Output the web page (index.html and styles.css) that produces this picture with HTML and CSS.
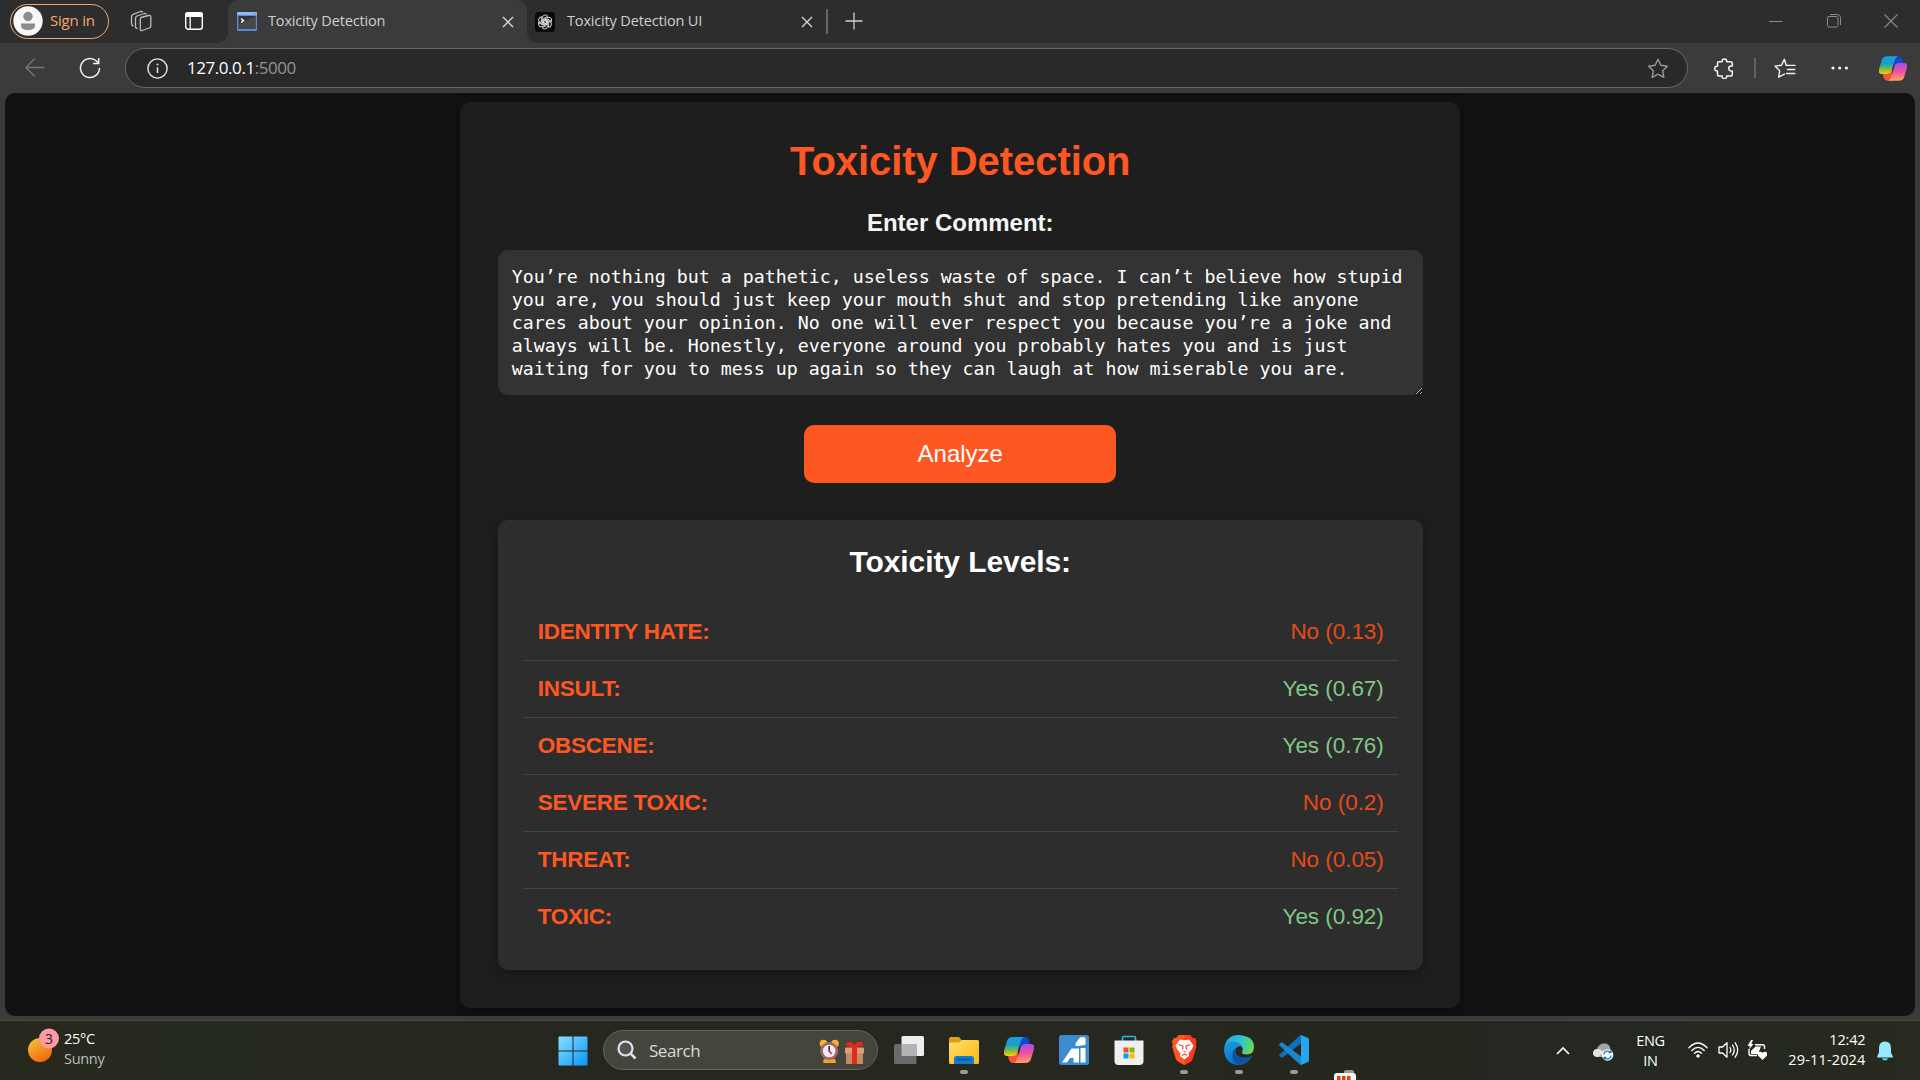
FILE: index.html
```html
<!DOCTYPE html>
<html lang="en">
<head>
<meta charset="utf-8">
<title>Toxicity Detection</title>
<link rel="stylesheet" href="styles.css">
</head>
<body>
<svg class="defs" width="0" height="0" aria-hidden="true">
  <defs>
    <linearGradient id="cpA" x1="0" y1="0" x2="0" y2="1"><stop offset="0" stop-color="#1b9bf0"/><stop offset=".4" stop-color="#169fc9"/><stop offset=".7" stop-color="#76b84a"/><stop offset="1" stop-color="#ffd000"/></linearGradient>
    <linearGradient id="cpB" x1="0" y1="0" x2="0" y2="1"><stop offset="0" stop-color="#a64cf0"/><stop offset=".5" stop-color="#f0529a"/><stop offset="1" stop-color="#ffa45c"/></linearGradient>
    <symbol id="copilot" viewBox="0 0 30 28">
      <path d="M16 1h5q3 0 4 3l1 4h-4q-3 0-4 3l-2 5z" fill="#1546cc"/>
      <path d="M14 27H9q-3 0-4-3l-1-4h4q3 0 4-3l2-5z" fill="#f4553a"/>
      <path d="M9 1h11q-2 1-3 4l-4 12q-1 3-4 3H3q-4 0-3-5l3-10Q4 1 9 1z" fill="url(#cpA)"/>
      <path d="M21 27H10q2-1 3-4l4-12q1-3 4-3h6q4 0 3 5l-3 10q-1 4-6 4z" fill="url(#cpB)"/>
    </symbol>
    <symbol id="cross" viewBox="0 0 12 12"><path d="M1 1l10 10M11 1L1 11" fill="none" stroke="currentColor" stroke-width="1.4"/></symbol>
  </defs>
</svg>

<div class="browser">
  <div class="tabstrip">
    <div class="signin">
      <svg width="30" height="30" viewBox="0 0 30 30"><circle cx="15" cy="15" r="14.7" fill="#f7f7f7"/><circle cx="15" cy="10.5" r="4.7" fill="#8c8c8c"/><path d="M8 17.5h14v2q0 4.5-7 4.5t-7-4.5z" fill="#8c8c8c"/></svg>
      <span>Sign in</span>
    </div>
    <svg class="workspaces" width="22" height="22" viewBox="0 0 22 22" fill="none" stroke="#bdbdbd" stroke-width="1.3"><path d="M11 7.5l7.5-2q2-.5 2.300 1.500v9q0 1.500-1.500 2l-7 2.500q-2 .5-2-1.500V9.500q0-1.500.7-2z"/><path d="M7.500 18.500q-2 0-2-2V8.500q0-2 1.500-2.500l7.500-2.500q1.500-.4 2 1"/><path d="M3.500 16q-2-.5-2-2.500V7q0-2 1.500-2.600L10.500 1.500q1.500-.4 2.300.8"/></svg>
    <svg class="tabmenu" width="20" height="20" viewBox="0 0 20 20"><rect x="1.700" y="1.700" width="16.600" height="16.600" rx="2.500" fill="none" stroke="#fff" stroke-width="1.400"/><path d="M1 6V4q0-3 3-3h12q3 0 3 3v2z" fill="#fff"/><path d="M6.200 6v12" stroke="#fff" stroke-width="1.300"/></svg>
    <div class="tab active">
      <svg class="favicon" width="20" height="19" viewBox="0 0 20 19"><rect width="20" height="19" rx="1" fill="#5a8bd0"/><path d="M0 1q0-1 1-1h18q1 0 1 1v2H0z" fill="#8eb9f2"/><circle cx="17.500" cy="1.800" r=".9" fill="#e26a5a"/><rect x="1.500" y="4" width="17" height="13" fill="#333"/><path d="M1.500 17V12L18.500 4v13z" fill="#484848"/><path d="M4 6.500l2.500 2L4 10.500" fill="none" stroke="#fff" stroke-width="1.500"/></svg>
      <span class="tab-title">Toxicity Detection</span>
      <svg class="close" width="12" height="12"><use href="#cross"/></svg>
    </div>
    <div class="tab">
      <svg class="favicon" width="20" height="20" viewBox="0 0 20 20"><rect width="20" height="20" rx="3.500" fill="#090909"/><g fill="none" stroke="#d9d9d9" stroke-width=".95"><path id="knot" d="M7.300 11.600V6.300Q7.300 3 10.300 3q1.500 0 2.500 1.100L8.700 6.500v5.300"/><use href="#knot" transform="rotate(60 10 10)"/><use href="#knot" transform="rotate(120 10 10)"/><use href="#knot" transform="rotate(180 10 10)"/><use href="#knot" transform="rotate(240 10 10)"/><use href="#knot" transform="rotate(300 10 10)"/></g></svg>
      <span class="tab-title">Toxicity Detection UI</span>
      <svg class="close" width="12" height="12"><use href="#cross"/></svg>
    </div>
    <i class="tab-sep"></i>
    <svg class="newtab" width="18" height="18" viewBox="0 0 18 18"><path d="M9 .5v17M.5 9h17" stroke="#d0d0d0" stroke-width="1.300"/></svg>
    <div class="wincontrols">
      <svg width="14" height="14" viewBox="0 0 14 14"><path d="M0 7.500h13.500" stroke="#8a8a8a"/></svg>
      <svg width="14" height="14" viewBox="0 0 14 14" fill="none" stroke="#8a8a8a"><rect x=".5" y="2.500" width="10.500" height="10.500" rx="1.500"/><path d="M3 .5h7.500q3 0 3 3V11"/></svg>
      <svg width="14" height="14" viewBox="0 0 14 14"><path d="M.5.500l13 13M13.500.500l-13 13" stroke="#8a8a8a" stroke-width="1.100"/></svg>
    </div>
  </div>

  <div class="toolbar">
    <svg class="back" width="20" height="20" viewBox="0 0 20 20"><path d="M19.500 9.500H1M9.500.800L.800 9.500l8.700 8.700" fill="none" stroke="#777" stroke-width="1.300"/></svg>
    <svg class="reload" width="22" height="22" viewBox="0 0 22 22"><path d="M20.500 11a9.500 9.500 0 1 1-3.300-7.200L19.300 6M19.700 1v5.500H14" fill="none" stroke="#f2f2f2" stroke-width="1.500"/></svg>
    <div class="urlbar">
      <svg width="21" height="21" viewBox="0 0 21 21"><circle cx="10.500" cy="10.500" r="9.600" fill="none" stroke="#e6e6e6" stroke-width="1.400"/><path d="M10.500 9.300V15" stroke="#e6e6e6" stroke-width="1.500"/><circle cx="10.500" cy="6.500" r="1" fill="#e6e6e6"/></svg>
      <span class="url">127.0.0.1<em>:5000</em></span>
      <svg class="star" width="22" height="21" viewBox="0 0 22 21"><path d="M11 1.300l2.900 6 6.500.9-4.700 4.600 1.100 6.500L11 16.200l-5.800 3.100 1.100-6.500L1.600 8.200l6.500-.9z" fill="none" stroke="#999" stroke-width="1.400" stroke-linejoin="round"/></svg>
    </div>
    <svg class="ext" width="20" height="21" viewBox="0 0 20 21"><path d="M4.500 3.800h3.600V3.200a2.300 2.300 0 0 1 4.600 0v.6h3.800q1.800 0 1.800 1.800V8h-1.100a2.500 2.500 0 0 0 0 5h1.100v3.200q0 1.800-1.800 1.800h-3.800v.4a2.300 2.300 0 0 1-4.600 0V18H5.300q-1.800 0-1.800-1.800V13H3a2.400 2.400 0 0 1 0-4.800h.5V5.300q0-1.500 1-1.500z" fill="none" stroke="#f2f2f2" stroke-width="1.500" stroke-linejoin="round"/></svg>
    <i class="tool-sep"></i>
    <svg class="favs" width="22" height="21" viewBox="0 0 22 21" fill="none" stroke="#f2f2f2" stroke-width="1.400" stroke-linejoin="round" stroke-linecap="round"><path d="M12.700 7.200l-.5-.2L10.300 1.300 7.500 7.200 1 8.100l4.700 4.600-1.100 6.500 5.800-3.100M12 7.300l9 .1M13.500 11.500h7.300M12.500 15.500h8.300"/></svg>
    <svg class="dots" width="18" height="4" viewBox="0 0 18 4" fill="#f2f2f2"><circle cx="2" cy="2" r="1.600"/><circle cx="8.700" cy="2" r="1.600"/><circle cx="15.400" cy="2" r="1.600"/></svg>
    <svg class="copilot" width="28" height="27"><use href="#copilot"/></svg>
  </div>

  <main class="viewport">
    <section class="container">
      <h1>Toxicity Detection</h1>
      <label for="comment">Enter Comment:</label>
      <textarea id="comment" spellcheck="false">You’re nothing but a pathetic, useless waste of space. I can’t believe how stupid you are, you should just keep your mouth shut and stop pretending like anyone cares about your opinion. No one will ever respect you because you’re a joke and always will be. Honestly, everyone around you probably hates you and is just waiting for you to mess up again so they can laugh at how miserable you are.</textarea>
      <button type="button">Analyze</button>
      <div class="results">
        <h2>Toxicity Levels:</h2>
        <ul>
          <li><strong>IDENTITY HATE:</strong><span class="no">No (0.13)</span></li>
          <li><strong>INSULT:</strong><span class="yes">Yes (0.67)</span></li>
          <li><strong>OBSCENE:</strong><span class="yes">Yes (0.76)</span></li>
          <li><strong>SEVERE TOXIC:</strong><span class="no">No (0.2)</span></li>
          <li><strong>THREAT:</strong><span class="no">No (0.05)</span></li>
          <li><strong>TOXIC:</strong><span class="yes">Yes (0.92)</span></li>
        </ul>
      </div>
    </section>
  </main>
</div>

<footer class="taskbar">
  <div class="weather">
    <svg width="34" height="36" viewBox="0 0 34 36"><defs><linearGradient id="sun" x1=".1" y1="0" x2=".7" y2="1"><stop offset="0" stop-color="#f2c53a"/><stop offset="1" stop-color="#f0660c"/></linearGradient></defs><circle cx="13" cy="22" r="12" fill="url(#sun)"/><circle cx="22" cy="10.500" r="10" fill="#ff99a4"/><text x="22" y="15.500" text-anchor="middle" class="badge-num">3</text></svg>
    <div class="weather-text"><span>25°C</span><span class="dim">Sunny</span></div>
  </div>
  <svg class="start" width="30" height="30" viewBox="0 0 30 30"><defs><linearGradient id="win" x1="0" y1="0" x2="1" y2="1"><stop offset="0" stop-color="#85e2ff"/><stop offset="1" stop-color="#0a94fb"/></linearGradient></defs><path d="M1.500.500H14.500V14.500H.500V1.500q0-1 1-1zM15.500.500h13q1 0 1 1v13h-14zM.500 15.500h14v14h-13q-1 0-1-1zM15.500 15.500h14v13q0 1-1 1h-13z" fill="url(#win)"/></svg>
  <div class="search">
    <svg width="20" height="20" viewBox="0 0 20 20"><circle cx="8.500" cy="8.500" r="7" fill="#53554c" stroke="#dfe2f0" stroke-width="2.200"/><path d="M13.700 13.700l4.800 4.800" stroke="#dfe2f0" stroke-width="2.500"/></svg>
    <span>Search</span>
    <svg class="highlights" width="46" height="25" viewBox="0 0 46 25"><path d="M4 23l1-3h11l1 3q0 1-1 1H5q-1 0-1-1z" fill="#efa32a"/><circle cx="4.500" cy="4.500" r="3.800" fill="#f3b32c"/><circle cx="16" cy="4.500" r="3.800" fill="#f3b32c"/><circle cx="10.200" cy="12" r="9" fill="#a06866"/><circle cx="10.200" cy="12" r="6.300" fill="#eee9f7"/><path d="M10.200 7v5.500" stroke="#333" stroke-width="1.600"/><path d="M10.200 12l2.500 3" stroke="#e8253c" stroke-width="1.600"/><path d="M27 13h17v11q0 1-1 1H28q-1 0-1-1z" fill="#c68a63"/><rect x="26" y="8.500" width="19" height="6" rx="1" fill="#dca077"/><path d="M33 8h5v17h-5z" fill="#e12a22"/><path d="M35.500 8.500L27 7q0-5 4-4 3 0 4.500 3.500Q37 3 40 3q4-1 4 4z" fill="#e8251f"/></svg>
  </div>
  <div class="apps">
    <div class="app"><svg width="30" height="28" viewBox="0 0 30 28"><rect x="7.500" y="0" width="22.500" height="20" rx="1.500" fill="#eee"/><rect x="0" y="8" width="22.500" height="20" rx="1.500" fill="#6a6a69"/><path d="M7.500 8h15v12H9q-1.500 0-1.500-1.500z" fill="#b4b4b4"/></svg></div>
    <div class="app open"><svg width="30" height="27" viewBox="0 0 30 27"><defs><linearGradient id="fold" x1="0" y1="0" x2="1" y2="1"><stop offset="0" stop-color="#ffdf6b"/><stop offset="1" stop-color="#fbb614"/></linearGradient></defs><path d="M0 2q0-2 2-2h8l3 3.500V8H0z" fill="#dfa00f"/><path d="M0 6.500q0-1 1-1h9L13 3h15.500q1.500 0 1.500 1.500V25.500q0 1.500-1.500 1.500h-27Q0 27 0 25.500z" fill="url(#fold)"/><path d="M5 27v-5q0-3 3-3h14q3 0 3 3v5z" fill="#117bd0"/><path d="M9 22.500h12" stroke="#0a4c8c" stroke-width="1.300" stroke-linecap="round"/></svg></div>
    <div class="app"><svg width="30" height="28"><use href="#copilot"/></svg></div>
    <div class="app"><svg width="30" height="30" viewBox="0 0 30 30"><rect width="30" height="30" rx="2.500" fill="#3b8bce"/><path d="M3 27.500L12.500 13.500H20v14h-5.500V23H11l-3 4.500zM16.500 8.500L20 3.500q3-2.500 6.500-.5v8H16.500z" fill="#fff"/><path d="M21.500 13H26.500v14.500h-5z" fill="#fff"/><path d="M15 12.500l12-2" stroke="#3b8bce" stroke-width="1.600"/></svg></div>
    <div class="app"><svg width="30" height="30" viewBox="0 0 30 30"><path d="M8.500 7V3q0-1.500 1.500-1.500h10q1.500 0 1.500 1.500v4" fill="none" stroke="#27b9ee" stroke-width="1.700"/><path d="M.500 5.500h29V26q0 4-4 4h-21q-4 0-4-4z" fill="#efefef"/><path d="M9.500 12.500h5v5h-5z" fill="#f05023"/><path d="M15.500 12.500h5v5h-5z" fill="#7eb900"/><path d="M9.500 18.500h5v5h-5z" fill="#00a3ee"/><path d="M15.500 18.500h5v5h-5z" fill="#feb800"/></svg></div>
    <div class="app open"><svg width="25" height="30" viewBox="0 0 25 30"><path d="M7 0h11l3 3 2 0 1.500 3-.7 3.500.7 2-4 13q-1 2-3 3l-5 2.500-5-2.500q-2-1-3-3l-4-13 .7-2L.500 6 2 3h2z" fill="#fb3c1c"/><path d="M0 6l2-3 2 0L7 0h5.500v30L8 27.500q-3-1-4-3l-4-13 .700-2z" fill="#ff5622"/><path d="M8 4.500l4.500.7 4.500-.7 4.500 6-1.500 3.500-3.500 4.500.5 2.500-4.500 3.500-4.500-3.500.5-2.500L5 14l-1.500-3.500z" fill="#fff"/><path d="M6.500 9.500l4.500 1.500-.5 3.500M18.500 9.500L14 11l.5 3.500M10 20.500l2.500-1.500 2.500 1.500" fill="none" stroke="#fb4a1f" stroke-width="1.200"/><path d="M11 16h3l-1.500 1.500z" fill="#fb4a1f"/></svg></div>
    <div class="app open"><svg width="30" height="30" viewBox="0 0 30 30"><defs><linearGradient id="edA" x1="0" y1=".3" x2="1" y2=".5"><stop offset="0" stop-color="#1fa7e8"/><stop offset=".55" stop-color="#35c3d0"/><stop offset="1" stop-color="#66dc4c"/></linearGradient><linearGradient id="edB" x1="0" y1="0" x2=".4" y2="1"><stop offset="0" stop-color="#1b9de2"/><stop offset="1" stop-color="#0c6fd0"/></linearGradient></defs><path d="M.300 13Q2 0 15 0q15 1 15 12 0 7.500-7.500 7.500-6 0-4-3.500 1-2-.5-4Q11 3 .300 13z" fill="url(#edA)"/><path d="M0 15Q0 7 8.500 6.500q7 0 9.500 5-6-1-7 4.500Q10.500 25 22 27q-3 3-8 3Q1 29 0 15z" fill="url(#edB)"/><path d="M11.500 13.500q-1 8 8 9 5 0 7.500-1.500 1.500-.5 1 .500Q24 30 14.500 30 7 27 8.500 19q.5-4 3-5.500z" fill="#0f54a0"/></svg></div>
    <div class="app open"><svg width="30" height="30" viewBox="0 0 30 30"><path d="M22 0l7 3q1 .5 1 2v20q0 1.500-1 2l-7 3z" fill="#29a5f0"/><path d="M22 0v8.500L3.500 22.500q-.8.500-1.500 0l-1.500-1.500q-.8-.8 0-1.600L20.500.800Q21.200 0 22 0z" fill="#0f6fb8"/><path d="M22 30v-8.500L3.500 7.500q-.8-.5-1.500 0L.500 9q-.8.800 0 1.600l20 18.600q.7.800 1.500.8z" fill="#1787cf"/></svg></div>
    <div class="app rising"><i></i><svg width="22" height="7" viewBox="0 0 22 7"><path d="M0 7V3q0-3 3-3h16q3 0 3 3v4z" fill="#f3f3f3"/><path d="M3 3h3.500v4H3zM8 3h3.500v4H8zM13 3h3.500v4H13z" fill="#d8430f"/></svg></div>
  </div>
  <div class="tray">
    <svg class="chev" width="14" height="9" viewBox="0 0 14 9"><path d="M1 8l6-6 6 6" fill="none" stroke="#fff" stroke-width="1.600"/></svg>
    <svg class="cloud" width="21" height="18" viewBox="0 0 21 18"><path d="M4 14q-4-.500-4-4 0-3.500 4-4 2-6 8-5.500 5 .500 5.500 6 2 1 2 4t-3 3.500z" fill="#a5a5a5"/><path d="M4 14q-4-.500-4-4 .5-4 4.500-4 3-.5 6 3l-5 5z" fill="#e4e4e4"/><circle cx="14.500" cy="12" r="5.800" fill="#fff"/><path d="M10.700 11.500a4 4 0 0 1 7-2M18.300 12.500a4 4 0 0 1-7 2M17.900 7.500v2.200h-2.200M11.100 16.500v-2.200h2.200" fill="none" stroke="#1670c5" stroke-width="1.300"/></svg>
    <div class="lang"><span>ENG</span><span>IN</span></div>
    <svg class="wifi" width="20" height="16" viewBox="0 0 20 16" fill="none" stroke="#fff" stroke-width="1.400" stroke-linecap="round"><path d="M1 5.800Q10-3.800 19 5.800M3.800 8.600q6.200-6.400 12.400 0M6.500 11.300q3.500-3.500 7 0"/><circle cx="10" cy="14" r="1.300" fill="#fff" stroke-width=".8"/></svg>
    <svg class="vol" width="21" height="18" viewBox="0 0 21 18" fill="none" stroke="#fff" stroke-width="1.300" stroke-linejoin="round" stroke-linecap="round"><path d="M1 6h3.500L9 1.800v14.400L4.500 12H1zM12 6.500q1.700 2.500 0 5M14.500 4q3.500 5 0 10M17.200 1.800q5 7.200 0 14.400"/></svg>
    <svg class="bat" width="20" height="20" viewBox="0 0 20 20"><path d="M8 4.700h7.500q2 0 2 2V9M2 9v4.500q0 2 2 2h6" fill="none" stroke="#fff" stroke-width="1.400"/><path d="M8.500 6.500h5.500L11 14H4V11z" fill="#fff"/><path d="M4 0L.500 6H3L2 9.500 6.500 4H4.300L6 0z" fill="#fff"/><path d="M15.500 20l-4.300-4.300q-1.500-2.200.5-3.700 2-1 3.800.8 1.800-1.800 3.800-.8 2 1.500.5 3.700z" fill="#fff"/></svg>
    <div class="clock"><span>12:42</span><span class="date">29-11-2024</span></div>
    <svg class="bell" width="16" height="20" viewBox="0 0 16 20"><path d="M8 .500q6 0 6 6.500v4.500l1.800 4q.3 1-.8 1H1q-1.100 0-.8-1L2 11.500V7Q2 .500 8 .500z" fill="#98e8ff"/><path d="M5 17.300h6q-.5 2.300-3 2.300t-3-2.300z" fill="#60cdf5"/></svg>
  </div>
</footer>
</body>
</html>
```

FILE: styles.css
```css
* { box-sizing: border-box; }

body {
  margin: 0;
  width: 1920px;
  height: 1080px;
  overflow: hidden;
  background: #26281f;
  font-family: "Open Sans", "Noto Sans", sans-serif;
  display: flex;
  flex-direction: column;
}

svg { display: block; flex: none; }
.defs { position: absolute; }

/* Browser window */
.browser {
  height: 1020px;
  background: #3b3b3b;
  display: flex;
  flex-direction: column;
}

.tabstrip {
  height: 43px;
  flex: none;
  background: #2d2d2d;
  display: flex;
  align-items: center;
}

.signin {
  width: 99px;
  height: 35px;
  margin-left: 10px;
  margin-bottom: 1px;
  padding-left: 2px;
  border: 1.5px solid #f0a871;
  border-radius: 18px;
  display: flex;
  align-items: center;
  gap: 7px;
  color: #f2aa73;
  font-size: 15px;
  letter-spacing: -0.2px;
}
.signin span { padding-bottom: 2px; }

.workspaces { margin-left: 21px; margin-bottom: 1px; }
.tabmenu { margin-left: 32px; margin-bottom: 1px; }

.tab {
  width: 299px;
  height: 43px;
  padding-left: 8px;
  display: flex;
  align-items: center;
  color: #cfcfcf;
  font-size: 14.5px;
  letter-spacing: -0.16px;
}
.tab.active {
  margin-left: 24px;
  padding-left: 9px;
  background: #3b3b3b;
  border-radius: 10px 10px 0 0;
  position: relative;
}
.tab.active::before,
.tab.active::after {
  content: "";
  position: absolute;
  bottom: 0;
  width: 10px;
  height: 10px;
}
.tab.active::before { left: -10px; background: radial-gradient(circle at 0 0, #2d2d2d 9.5px, #3b3b3b 10px); }
.tab.active::after { right: -10px; background: radial-gradient(circle at 100% 0, #2d2d2d 9.5px, #3b3b3b 10px); }
.tab-title { margin-left: 12px; width: 234px; padding-bottom: 3px; }
.tab.active .tab-title { margin-left: 11px; }
.close { color: #d6d6d6; }

.tab-sep { width: 1.5px; height: 25px; background: #666; }
.newtab { margin-left: 17px; margin-bottom: 2px; }
.wincontrols { margin-left: auto; margin-right: 22px; margin-bottom: 1px; display: flex; gap: 43.5px; }

.toolbar {
  height: 50px;
  flex: none;
  display: flex;
  align-items: center;
}
.back { margin-left: 25px; }
.reload { margin-left: 34px; }
.urlbar {
  width: 1563px;
  height: 40px;
  margin-left: 24px;
  padding: 0 18px 0 21px;
  background: #292929;
  border: 1px solid #686868;
  border-radius: 20px;
  display: flex;
  align-items: center;
}
.url {
  margin-left: 19px;
  flex: 1;
  color: #fff;
  font-size: 17px;
  letter-spacing: -0.45px;
  padding-bottom: 2px;
}
.url em { font-style: normal; color: #929292; }
.ext { margin-left: 26px; }
.tool-sep { width: 1.5px; height: 20px; margin-left: 20px; background: #626262; }
.favs { margin-left: 18px; }
.dots { margin-left: 35px; }
.copilot { margin-left: 30px; }

/* Page */
.viewport {
  height: 923px;
  margin: 0 5px;
  padding-top: 9px;
  background: #121212;
  border-radius: 10px;
  overflow: hidden;
  font-family: "Liberation Sans", Arial, sans-serif;
  color: #fff;
}
.container {
  width: 1000px;
  height: 906px;
  margin: 0 auto;
  padding: 36px 37.5px 0 38px;
  background: #1e1e1e;
  border-radius: 10px;
  box-shadow: 0 5px 15px rgba(0, 0, 0, 0.4);
  display: flex;
  flex-direction: column;
  align-items: center;
}
h1 {
  margin: 0;
  font-size: 40px;
  line-height: 46px;
  letter-spacing: -0.06px;
  color: #ff5722;
}
label {
  margin: 25px 0 14px;
  font-size: 24px;
  line-height: 27px;
  font-weight: bold;
  color: #f5f5f5;
}
textarea {
  width: 925px;
  height: 145px;
  padding: 15px 15px 15px 14px;
  border: 0;
  border-radius: 10px;
  background: #333;
  color: #fff;
  font-family: "DejaVu Sans Mono", Consolas, monospace;
  font-size: 18.27px;
  line-height: 23px;
  overflow: hidden;
  outline: 0;
}
button {
  width: 312px;
  height: 58px;
  margin: 30px 0 37px;
  border: 0;
  border-radius: 10px;
  background: #ff5722;
  color: #fff;
  font-family: inherit;
  font-size: 24px;
}
.results {
  width: 925px;
  height: 450px;
  padding: 25px 25px 0;
  background: #2d2d2d;
  border-radius: 10px;
  box-shadow: 0 4px 12px rgba(0, 0, 0, 0.3);
}
h2 {
  margin: 0 0 25px;
  font-size: 30px;
  line-height: 34px;
  letter-spacing: -0.08px;
  text-align: center;
}
ul { margin: 0; padding: 0; list-style: none; }
li {
  height: 57px;
  padding: 0 14px 0 15px;
  display: flex;
  justify-content: space-between;
  align-items: center;
  border-bottom: 1px solid #444;
  font-size: 22.5px;
}
li:last-child { border-bottom-color: transparent; }
li strong { color: #ff5722; letter-spacing: -0.27px; }
.no { color: #e64a19; letter-spacing: -0.05px; }
.yes { color: #81c784; letter-spacing: -0.05px; }

/* Taskbar */
.taskbar {
  height: 60px;
  border-top: 1px solid #47483f;
  background: linear-gradient(90deg, #27281d, #252a20 10%, #26271e 30%, #26271e 60%, #242820 85%, #282a1f);
  display: flex;
  align-items: flex-start;
  color: #fff;
  font-size: 14.5px;
  line-height: 20px;
}
.taskbar span { display: block; }
.weather { margin: 7px 0 0 27px; width: 530.5px; display: flex; gap: 3px; }
.badge-num { font-size: 14px; fill: #222; }
.weather-text { padding-top: 1px; letter-spacing: -0.3px; }
.dim { color: #bdbdb9; }
.start { margin-top: 15px; }
.search {
  width: 275px;
  height: 40px;
  margin: 9px 0 0 15.5px;
  padding: 0 12px 0 13px;
  border: 1px solid #62645c;
  border-radius: 20px;
  background: #44463d;
  display: flex;
  align-items: center;
  font-size: 17px;
  letter-spacing: -0.45px;
  color: #dadad6;
}
.search span { margin-left: 12px; padding-top: 1px; }
.highlights { margin-left: auto; margin-top: 2px; }
.apps { display: flex; margin-left: 3.5px; }
.app {
  width: 55px;
  height: 58px;
  display: flex;
  justify-content: center;
  align-items: center;
  position: relative;
}
.app.open::after {
  content: "";
  position: absolute;
  left: 23.5px;
  bottom: 5px;
  width: 8px;
  height: 4px;
  border-radius: 2px;
  background: #999a95;
}
.app.rising { height: 59px; flex-direction: column; justify-content: flex-end; align-items: flex-start; padding-left: 12.5px; }
.app.rising i { width: 10px; height: 3px; margin-left: 10px; border-radius: 2px 2px 0 0; background: #999a95; }
.tray { display: flex; align-items: flex-start; }
.chev { margin: 25px 0 0 179px; }
.cloud { margin: 22px 0 0 23px; }
.lang { width: 50px; margin: 10px 0 0 12px; text-align: center; letter-spacing: -0.3px; }
.wifi { margin: 21px 0 0 12px; }
.vol { margin: 20px 0 0 10px; }
.bat { margin: 19px 0 0 8px; }
.clock { width: 90px; margin: 9px 0 0 9px; text-align: right; letter-spacing: -0.15px; }
.date { letter-spacing: 0.15px; }
.bell { margin: 20px 0 0 11px; }
```
